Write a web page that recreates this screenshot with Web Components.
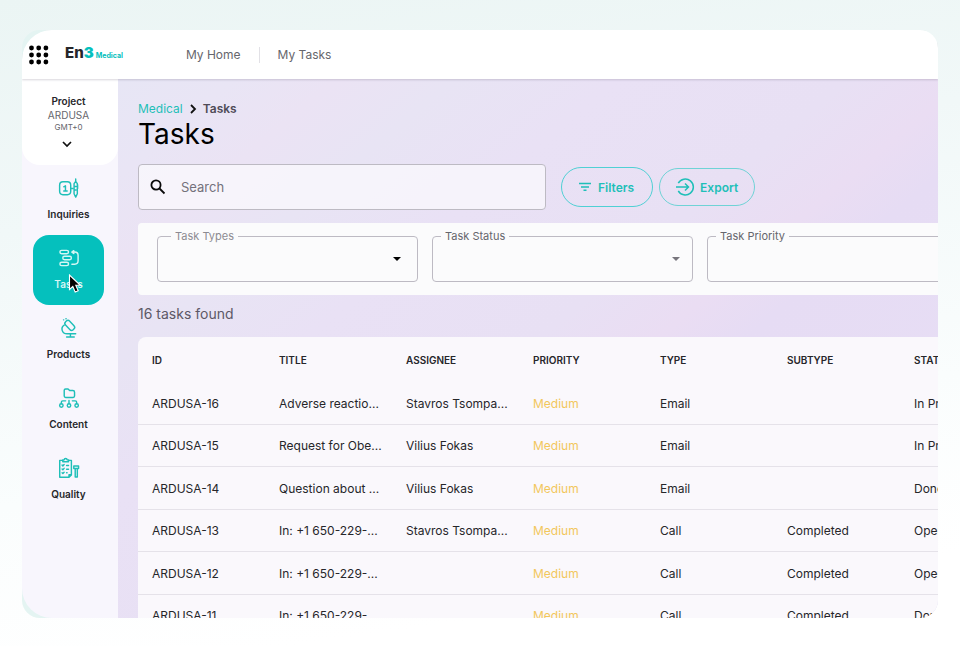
<!DOCTYPE html>
<html lang="en">
<head>
<meta charset="utf-8">
<meta name="viewport" content="width=device-width, initial-scale=1">
<title>Tasks</title>
<style>
    :root {
        --teal: #05c0bd;
        --teal-text: #1fbfb8;
        --ink: #26262a;
        --muted: #66666c;
        --outline: #bdbac3;
    }
    body {
        margin: 0;
        font-family: Inter, "Liberation Sans", sans-serif;
        font-size: 12px;
        color: var(--ink);
        background: #fff;
    }
</style>
</head>
<body>
<app-frame>
    <top-bar slot="header">
        <a href="#home">My Home</a>
        <a href="#tasks">My Tasks</a>
    </top-bar>
    <side-nav slot="nav" project="ARDUSA" timezone="GMT+0">
        <nav-item icon="inquiries">Inquiries</nav-item>
        <nav-item icon="tasks" active>Tasks</nav-item>
        <nav-item icon="products">Products</nav-item>
        <nav-item icon="content">Content</nav-item>
        <nav-item icon="quality">Quality</nav-item>
    </side-nav>
    <page-heading section="Medical">Tasks</page-heading>
    <action-bar>
        <search-box></search-box>
        <pill-button icon="filter" large>Filters</pill-button>
        <pill-button icon="export">Export</pill-button>
    </action-bar>
    <filter-panel>
        <filter-select label="Task Types" focused></filter-select>
        <filter-select label="Task Status"></filter-select>
        <filter-select label="Task Priority"></filter-select>
    </filter-panel>
    <task-table></task-table>
</app-frame>

<script>
const ICONS = {
    inquiries: `
        <rect x="1.700" y="4.500" width="11.600" height="13.500" rx="3.500"/>
        <path d="M6 9.700l1.800-1V14M6 14.200h3.600M13.500 11.500h2.300"/>
        <path d="M18.500 1.500v3M16.800 6.500l1.700-2.300 1.700 2.300v10.500l-1.700 3.500-1.700-3.500zM20.500 7.500v4M16.800 9.500h2M16.800 13h2"/>`,
    tasks: `
        <rect x="2" y="3" width="9" height="3.600" rx="1.800"/>
        <rect x="5" y="9.200" width="9" height="3.600" rx="1.800"/>
        <rect x="2" y="15.400" width="9" height="3.600" rx="1.800"/>
        <path d="M15.500 4.800h2a3.500 3.500 0 0 1 3.500 3.500v5.700a3.500 3.500 0 0 1-3.500 3.500H14.500M16.500 3.300l-2 1.500 2 1.500z"/>`,
    products: `
        <rect x="9.300" y="2.500" width="6" height="11.500" rx="2.500" transform="rotate(-43 12.300 8.250)"/>
        <path d="M8.300 1.300h.2M5.800 2.500h.2"/>
        <path d="M6.500 8C2.500 10.500 3.800 17 9.500 17H18.500M13 17v3.200M9 20.500h8"/>`,
    content: `
        <path d="M6.500 9V3A1.500 1.500 0 0 1 8 1.500h2.500l1.700 1.700h3.300A1.800 1.800 0 0 1 17.300 5v4a1.500 1.500 0 0 1-1.500 1.500H8A1.500 1.500 0 0 1 6.500 9z"/>
        <path d="M11.500 13.500V17M3.500 17v-1.500a1.500 1.500 0 0 1 1.500-1.500H8M19.500 17v-1.500a1.500 1.500 0 0 0-1.500-1.500h-3"/>
        <circle cx="3.500" cy="18.800" r="1.800"/><circle cx="11.500" cy="18.800" r="1.800"/><circle cx="19.500" cy="18.800" r="1.800"/>`,
    quality: `
        <path d="M5 3H1.800v17.700h9.700l2.500-2.500V3h-3M11.500 20.500V18H14"/>
        <path d="M5 4.500V2.500h1.500a1.500 1.500 0 0 1 3 0H11v2z"/>
        <path d="M4.300 8l.8.800 1.300-1.400M4.300 12l.8.800 1.300-1.400M4.300 16l.8.800 1.300-1.400M9 8.300h2M9 12.300h2M9 16h.5"/>
        <path d="M16.500 9h5v2.500h-5zM18 11.500h2.200V20.500H18z"/>`
};

class AppFrame extends HTMLElement {
    constructor() {
        super();
        this.attachShadow({ mode: 'open' });
    }

    connectedCallback() {
        this.shadowRoot.innerHTML = `
            <style>
                :host {
                    display: flex;
                    box-sizing: border-box;
                    height: 100vh;
                    padding: 30px 22px 28px;
                    background: linear-gradient(172deg, #ebf5f4 0%, #f1f8f8 30%, #fafdfd 65%, #fff 88%);
                }
                .frame {
                    flex: 1;
                    min-width: 0;
                    overflow: hidden;
                    border-radius: 18px;
                    background: #e4f4f2;
                }
                .app {
                    display: flex;
                    flex-direction: column;
                    height: 100%;
                    overflow: hidden;
                    border-radius: 30px 0 0 30px;
                }
                .body {
                    flex: 1;
                    display: flex;
                    min-height: 0;
                }
                main {
                    flex: 1;
                    min-width: 0;
                    padding: 22px 0 0 20px;
                    overflow: hidden;
                    background: linear-gradient(140deg, #e7e6f5 0%, #e9e5f5 8%, #ebe3f4 15%, #e8e4f4 23%, #e9e1f5 34%, #e8e0f4 50%, #eaddf3 58%, #e6dcf4 64%, #e8dff5 100%);
                }
            </style>
            <div class="frame">
                <div class="app">
                    <slot name="header"></slot>
                    <div class="body">
                        <slot name="nav"></slot>
                        <main><slot></slot></main>
                    </div>
                </div>
            </div>
        `;
    }
}

class TopBar extends HTMLElement {
    constructor() {
        super();
        this.attachShadow({ mode: 'open' });
    }

    connectedCallback() {
        this.shadowRoot.innerHTML = `
            <style>
                :host {
                    position: relative;
                    z-index: 1;
                    display: flex;
                    align-items: center;
                    height: 49px;
                    background: #fff;
                    box-shadow: 0 1px 2px rgba(60, 50, 80, 0.2);
                }
                .apps {
                    display: flex;
                    margin-left: 6px;
                    padding: 0;
                    border: none;
                    background: none;
                }
                .logo {
                    display: flex;
                    align-items: baseline;
                    margin-left: 15px;
                    font-size: 15px;
                    font-weight: 800;
                    line-height: 20px;
                }
                .logo b {
                    font-weight: 900;
                    color: var(--teal);
                }
                .logo small {
                    margin-left: 2px;
                    font-size: 7px;
                    font-weight: 700;
                    color: var(--teal);
                }
                nav {
                    display: flex;
                    margin-left: 44px;
                }
                ::slotted(a) {
                    padding: 0 18px;
                    border-left: 1px solid transparent;
                    font-size: 12px;
                    line-height: 16px;
                    color: var(--muted);
                    text-decoration: none;
                }
                ::slotted(a:not(:first-child)) {
                    border-color: #e2e1e6;
                }
            </style>
            <button class="apps" aria-label="Apps">
                <svg width="22" height="22" viewBox="0 0 22 22">
                    <circle cx="3.500" cy="4" r="2.400"/><circle cx="10.700" cy="4" r="2.400"/><circle cx="17.900" cy="4" r="2.400"/>
                    <circle cx="3.500" cy="11" r="2.400"/><circle cx="10.700" cy="11" r="2.400"/><circle cx="17.900" cy="11" r="2.400"/>
                    <circle cx="3.500" cy="18" r="2.400"/><circle cx="10.700" cy="18" r="2.400"/><circle cx="17.900" cy="18" r="2.400"/>
                </svg>
            </button>
            <div class="logo"><span>En</span><b>3</b><small>Medical</small></div>
            <nav><slot></slot></nav>
        `;
    }
}

class SideNav extends HTMLElement {
    constructor() {
        super();
        this.attachShadow({ mode: 'open' });
    }

    connectedCallback() {
        this.shadowRoot.innerHTML = `
            <style>
                :host {
                    display: block;
                    flex: 0 0 96px;
                    background: #f8f6fd;
                }
                .project {
                    display: flex;
                    flex-direction: column;
                    align-items: center;
                    box-sizing: border-box;
                    width: 100%;
                    height: 86px;
                    padding: 14px 3px 0 0;
                    border: none;
                    border-radius: 0 0 18px 18px;
                    background: #fff;
                    font: inherit;
                    color: var(--muted);
                }
                .name {
                    font-size: 10px;
                    font-weight: 600;
                    line-height: 16px;
                    color: var(--ink);
                }
                .code {
                    font-size: 10px;
                    line-height: 12px;
                }
                .zone {
                    font-size: 8px;
                    line-height: 12px;
                }
                svg {
                    margin-top: 4px;
                }
                .items {
                    padding-right: 3px;
                }
            </style>
            <button class="project">
                <span class="name">Project</span>
                <span class="code">${this.getAttribute('project')}</span>
                <span class="zone">${this.getAttribute('timezone')}</span>
                <svg width="14" height="14" viewBox="0 0 14 14" fill="none" stroke="#111" stroke-width="1.700">
                    <path d="M1 5l4 4 4-4"/>
                </svg>
            </button>
            <div class="items"><slot></slot></div>
        `;
    }
}

class NavItem extends HTMLElement {
    constructor() {
        super();
        this.attachShadow({ mode: 'open' });
    }

    connectedCallback() {
        // the pointer is shown only over the active item
        const pointer = this.hasAttribute('active') ? `
            <svg class="pointer" width="14" height="20" viewBox="0 0 14 20">
                <path d="M1.500 1v14.500l3.300-3 2.400 5.500 3-1.300-2.400-5.400h4.500z" fill="#050505" stroke="#fff" stroke-width="1.100"/>
            </svg>` : '';

        this.shadowRoot.innerHTML = `
            <style>
                :host {
                    display: flex;
                    justify-content: center;
                }
                a {
                    position: relative;
                    display: flex;
                    flex-direction: column;
                    align-items: center;
                    box-sizing: border-box;
                    width: 71px;
                    height: 70px;
                    padding-top: 12px;
                    border-radius: 16px;
                    color: var(--ink);
                    font-size: 10px;
                    font-weight: 600;
                    line-height: 14px;
                    text-decoration: none;
                }
                .icon {
                    margin-bottom: 8px;
                    stroke: var(--teal-text);
                }
                :host([active]) a {
                    background: var(--teal);
                    color: #d5f6f4;
                }
                :host([active]) .icon {
                    stroke: #d5f6f4;
                }
                .pointer {
                    position: absolute;
                    left: 35px;
                    top: 39px;
                }
            </style>
            <a href="#${this.getAttribute('icon')}">
                <svg class="icon" width="22" height="22" viewBox="0 0 23 22" fill="none" stroke-width="1.500" stroke-linecap="round" stroke-linejoin="round">
                    ${ICONS[this.getAttribute('icon')]}
                </svg>
                <span><slot></slot></span>
                ${pointer}
            </a>
        `;
    }
}

class PageHeading extends HTMLElement {
    constructor() {
        super();
        this.attachShadow({ mode: 'open' });
    }

    connectedCallback() {
        this.shadowRoot.innerHTML = `
            <style>
                :host {
                    display: block;
                    margin-bottom: 13px;
                }
                .crumbs {
                    display: flex;
                    align-items: center;
                    gap: 5px;
                    font-size: 12px;
                    line-height: 16px;
                }
                .crumbs a {
                    color: var(--teal-text);
                    text-decoration: none;
                }
                .crumbs span {
                    font-weight: 600;
                    color: #4f4b57;
                }
                h1 {
                    margin: 0;
                    font-size: 28px;
                    font-weight: 400;
                    line-height: 34px;
                    color: #000;
                }
            </style>
            <div class="crumbs">
                <a href="#medical">${this.getAttribute('section')}</a>
                <svg width="10" height="12" viewBox="0 0 10 12" fill="none" stroke="#111" stroke-width="1.800">
                    <path d="M3 2l4 4-4 4"/>
                </svg>
                <span>${this.textContent}</span>
            </div>
            <h1><slot></slot></h1>
        `;
    }
}

class ActionBar extends HTMLElement {
    constructor() {
        super();
        this.attachShadow({ mode: 'open' });
    }

    connectedCallback() {
        this.shadowRoot.innerHTML = `
            <style>
                :host {
                    display: flex;
                    align-items: center;
                    gap: 6px;
                    margin-bottom: 13px;
                }
                ::slotted(search-box) {
                    width: 51%;
                    margin-right: 9px;
                }
            </style>
            <slot></slot>
        `;
    }
}

class SearchBox extends HTMLElement {
    constructor() {
        super();
        this.attachShadow({ mode: 'open' });
    }

    connectedCallback() {
        this.shadowRoot.innerHTML = `
            <style>
                :host {
                    display: block;
                }
                label {
                    display: flex;
                    align-items: center;
                    gap: 14px;
                    box-sizing: border-box;
                    height: 46px;
                    padding: 0 10px;
                    border: 1px solid var(--outline);
                    border-radius: 4px;
                    background: rgba(255, 255, 255, 0.6);
                }
                input {
                    flex: 1;
                    min-width: 0;
                    padding: 0;
                    border: none;
                    outline: none;
                    background: none;
                    font: inherit;
                    font-size: 13px;
                    color: var(--ink);
                }
                input::placeholder {
                    color: #74717b;
                }
            </style>
            <label>
                <svg width="18" height="18" viewBox="0 0 18 18" fill="none" stroke="#0a0a0a" stroke-width="1.800">
                    <circle cx="7" cy="7" r="4.600"/>
                    <path d="M10.500 10.500l5 5"/>
                </svg>
                <input type="text" placeholder="Search" aria-label="Search">
            </label>
        `;
    }
}

class PillButton extends HTMLElement {
    constructor() {
        super();
        this.attachShadow({ mode: 'open' });
    }

    iconMarkup() {
        if (this.getAttribute('icon') === 'filter') {
            return `
                <svg width="12" height="14" viewBox="0 0 12 14" fill="none" stroke="currentColor" stroke-width="1.400">
                    <path d="M0 3.500h12M2 7h8M4.500 10.300h3"/>
                </svg>`;
        }
        return `
            <svg width="18" height="18" viewBox="0 0 18 18" fill="none" stroke="currentColor" stroke-width="1.500">
                <path d="M2.300 5.200a8 8 0 1 1 0 7.600M0 9h12.500M9 5.500L12.500 9 9 12.500"/>
            </svg>`;
    }

    connectedCallback() {
        this.shadowRoot.innerHTML = `
            <style>
                :host {
                    display: block;
                }
                button {
                    display: flex;
                    align-items: center;
                    gap: 6px;
                    height: 38px;
                    padding: 0 16px;
                    border: 1px solid #6fd3d6;
                    border-radius: 20px;
                    background: none;
                    font: inherit;
                    font-weight: 600;
                    color: var(--teal-text);
                    white-space: nowrap;
                }
                :host([large]) button {
                    gap: 7px;
                    height: 40px;
                    padding: 0 18px 0 17px;
                    border-color: #4fd0d4;
                }
                svg {
                    overflow: visible;
                }
            </style>
            <button>${this.iconMarkup()}<slot></slot></button>
        `;
    }
}

class FilterPanel extends HTMLElement {
    constructor() {
        super();
        this.attachShadow({ mode: 'open' });
    }

    connectedCallback() {
        this.shadowRoot.innerHTML = `
            <style>
                :host {
                    display: grid;
                    grid-template-columns: repeat(3, minmax(261px, 1fr));
                    gap: 14px;
                    padding: 7px 0 13px 19px;
                    overflow: hidden;
                    border-radius: 4px 0 0 4px;
                    background: #fbfbfc;
                }
            </style>
            <slot></slot>
        `;
    }
}

class FilterSelect extends HTMLElement {
    constructor() {
        super();
        this.attachShadow({ mode: 'open' });
    }

    connectedCallback() {
        this.shadowRoot.innerHTML = `
            <style>
                :host {
                    display: block;
                    --tone: #77757c;
                }
                :host([focused]) {
                    --tone: #000;
                }
                fieldset {
                    display: grid;
                    align-items: center;
                    box-sizing: border-box;
                    height: 52px;
                    margin: 0;
                    padding: 0 10px 6px 8px;
                    border: 1px solid var(--outline);
                    border-radius: 4px;
                }
                legend {
                    padding: 0 4px;
                    font-size: 11px;
                    line-height: 12px;
                    color: var(--muted);
                }
                :host([focused]) fieldset {
                    padding: 0 14px 6px 13px;
                }
                :host([focused]) legend {
                    color: #8d8b92;
                }
                select, svg {
                    grid-area: 1 / 1;
                }
                select {
                    width: 100%;
                    height: 30px;
                    border: none;
                    outline: none;
                    background: none;
                    appearance: none;
                    font: inherit;
                }
                svg {
                    justify-self: end;
                    margin-right: 2px;
                    fill: var(--tone);
                    pointer-events: none;
                }
            </style>
            <fieldset>
                <legend><label for="field">${this.getAttribute('label')}</label></legend>
                <select id="field"></select>
                <svg width="8" height="4" viewBox="0 0 8 4"><path d="M0 0h8L4 4z"/></svg>
            </fieldset>
        `;
    }
}

class TaskTable extends HTMLElement {
    constructor() {
        super();
        this.attachShadow({ mode: 'open' });
        this.total = 16;
        this.columns = ['ID', 'TITLE', 'ASSIGNEE', 'PRIORITY', 'TYPE', 'SUBTYPE', 'STATUS'];
        this.rows = [
            ['ARDUSA-16', 'Adverse reactio...', 'Stavros Tsompa...', 'Medium', 'Email', '', 'In Progress'],
            ['ARDUSA-15', 'Request for Obe...', 'Vilius Fokas', 'Medium', 'Email', '', 'In Progress'],
            ['ARDUSA-14', 'Question about ...', 'Vilius Fokas', 'Medium', 'Email', '', 'Done'],
            ['ARDUSA-13', 'In: +1 650-229-...', 'Stavros Tsompa...', 'Medium', 'Call', 'Completed', 'Open'],
            ['ARDUSA-12', 'In: +1 650-229-...', '', 'Medium', 'Call', 'Completed', 'Open'],
            ['ARDUSA-11', 'In: +1 650-229-', '', 'Medium', 'Call', 'Completed', 'Done']
        ];
    }

    connectedCallback() {
        this.shadowRoot.innerHTML = `
            <style>
                :host {
                    display: block;
                }
                p {
                    margin: 0;
                    padding: 11px 0 15px;
                    font-size: 14px;
                    line-height: 16px;
                    color: #5d5866;
                }
                .sheet {
                    overflow: hidden;
                    border-radius: 8px 0 0 0;
                    background: #faf8fc;
                }
                table {
                    width: 100%;
                    min-width: 889px;
                    table-layout: fixed;
                    border-spacing: 0;
                }
                th, td {
                    box-sizing: border-box;
                    padding: 0 0 0 14px;
                    text-align: left;
                    white-space: nowrap;
                }
                th {
                    height: 45px;
                    font-size: 10px;
                    font-weight: 600;
                }
                td {
                    height: 42px;
                    border-bottom: 1px solid #e5e2e9;
                }
                tr:nth-child(odd) td {
                    height: 43px;
                }
                .priority {
                    color: #f2c75c;
                }
            </style>
            <p>${this.total} tasks found</p>
            <div class="sheet">
                <table>
                    <thead>
                        <tr>${this.columns.map(name => `<th>${name}</th>`).join('')}</tr>
                    </thead>
                    <tbody>
                        ${this.rows.map(row => `<tr>${row.map((cell, i) => `<td${i === 3 ? ' class="priority"' : ''}>${cell}</td>`).join('')}</tr>`).join('')}
                    </tbody>
                </table>
            </div>
        `;
    }
}

customElements.define('app-frame', AppFrame);
customElements.define('top-bar', TopBar);
customElements.define('side-nav', SideNav);
customElements.define('nav-item', NavItem);
customElements.define('page-heading', PageHeading);
customElements.define('action-bar', ActionBar);
customElements.define('search-box', SearchBox);
customElements.define('pill-button', PillButton);
customElements.define('filter-panel', FilterPanel);
customElements.define('filter-select', FilterSelect);
customElements.define('task-table', TaskTable);
</script>
</body>
</html>
